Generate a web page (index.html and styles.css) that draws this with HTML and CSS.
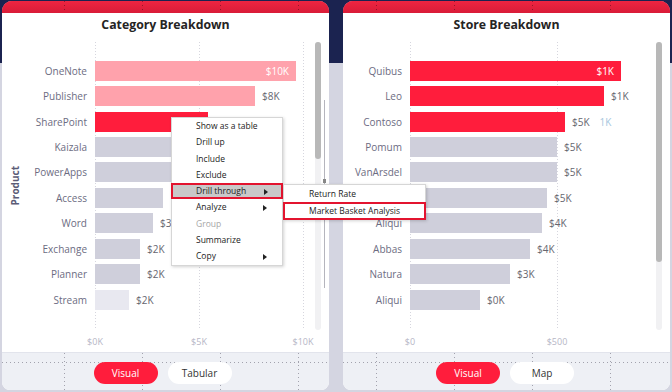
FILE: index.html
```html
<!DOCTYPE html>
<html>
<head>
<meta charset="utf-8">
<title>Breakdown</title>
<link rel="stylesheet" href="styles.css">
</head>
<body>
<div class="canvas">
  <section class="panel">
    <div class="strip strip-cat"></div>
    <h2 class="title">Category Breakdown</h2>
    <div class="chart">
      <div class="ytitle"><span>Product</span></div>
      <div class="main main-cat">
        <div class="rows rows-cat">
          <div class="row"><span class="label">OneNote</span><div class="cell"><div class="bar pink" style="width:201px"><span class="in">$10K</span></div></div></div>
          <div class="row"><span class="label">Publisher</span><div class="cell"><div class="bar pink" style="width:160px"></div><span class="val">$8K</span></div></div>
          <div class="row"><span class="label">SharePoint</span><div class="cell"><div class="bar red" style="width:113px"></div></div></div>
          <div class="row"><span class="label">Kaizala</span><div class="cell"><div class="bar gray" style="width:130px"></div></div></div>
          <div class="row"><span class="label">PowerApps</span><div class="cell"><div class="bar gray" style="width:120px"></div></div></div>
          <div class="row"><span class="label">Access</span><div class="cell"><div class="bar gray" style="width:68px"></div></div></div>
          <div class="row"><span class="label">Word</span><div class="cell"><div class="bar gray" style="width:58px"></div><span class="val">$3K</span></div></div>
          <div class="row"><span class="label">Exchange</span><div class="cell"><div class="bar gray" style="width:45px"></div><span class="val">$2K</span></div></div>
          <div class="row"><span class="label">Planner</span><div class="cell"><div class="bar gray" style="width:45px"></div><span class="val">$2K</span></div></div>
          <div class="row"><span class="label">Stream</span><div class="cell"><div class="bar light" style="width:34px"></div><span class="val">$2K</span></div></div>
        </div>
        <div class="axis axis-cat"><span class="tick"><span>$0K</span></span><span class="tick"><span>$5K</span></span><span class="tick"><span>$10K</span></span></div>
      </div>
      <div class="scroll"><div class="thumb thumb-cat"></div></div>
      <div class="edge"></div>
    </div>
    <div class="footer footer-cat">
      <span class="pill on">Visual</span><span class="pill">Tabular</span>
    </div>
  </section>

  <section class="panel">
    <div class="strip strip-store"></div>
    <h2 class="title">Store Breakdown</h2>
    <div class="chart">
      <div class="main main-store">
        <div class="rows rows-store">
          <div class="row"><span class="label">Quibus</span><div class="cell"><div class="bar red" style="width:211px"><span class="in">$1K</span></div></div></div>
          <div class="row"><span class="label">Leo</span><div class="cell"><div class="bar red" style="width:194px"></div><span class="val">$1K</span></div></div>
          <div class="row"><span class="label">Contoso</span><div class="cell"><div class="bar red" style="width:155px"></div><span class="val">$5K</span><span class="ghost">1K</span></div></div>
          <div class="row"><span class="label">Pomum</span><div class="cell"><div class="bar gray" style="width:147px"></div><span class="val">$5K</span></div></div>
          <div class="row"><span class="label">VanArsdel</span><div class="cell"><div class="bar gray" style="width:147px"></div><span class="val">$5K</span></div></div>
          <div class="row"><span class="label"></span><div class="cell"><div class="bar gray" style="width:137px"></div><span class="val">$5K</span></div></div>
          <div class="row"><span class="label">Aliqui</span><div class="cell"><div class="bar gray" style="width:132px"></div><span class="val">$4K</span></div></div>
          <div class="row"><span class="label">Abbas</span><div class="cell"><div class="bar gray" style="width:120px"></div><span class="val">$4K</span></div></div>
          <div class="row"><span class="label">Natura</span><div class="cell"><div class="bar gray" style="width:100px"></div><span class="val">$3K</span></div></div>
          <div class="row"><span class="label">Aliqui</span><div class="cell"><div class="bar gray" style="width:70px"></div><span class="val">$0K</span></div></div>
        </div>
        <div class="axis axis-store"><span class="tick"><span>$0</span></span><span class="tick"><span>$500</span></span></div>
      </div>
      <div class="scroll"><div class="thumb thumb-store"></div></div>
    </div>
    <div class="footer footer-store">
      <span class="pill on">Visual</span><span class="pill">Map</span>
    </div>
  </section>
</div>

<div class="menu">
  <div class="mi">Show as a table</div>
  <div class="mi">Drill up</div>
  <div class="mi">Include</div>
  <div class="mi">Exclude</div>
  <div class="mi hl">Drill through<span class="arr"></span></div>
  <div class="mi">Analyze<span class="arr"></span></div>
  <div class="mi dis">Group</div>
  <div class="mi">Summarize</div>
  <div class="mi">Copy<span class="arr"></span></div>
</div>
<div class="submenu">
  <div class="si">Return Rate</div>
  <div class="si sel">Market Basket Analysis</div>
</div>
</body>
</html>
```

FILE: styles.css
```css
* { box-sizing: border-box; margin: 0; padding: 0; }
html, body { width: 672px; height: 392px; overflow: hidden; }
body {
  position: relative;
  font-family: "Open Sans", "Noto Sans", sans-serif;
  background: linear-gradient(to bottom, #1b2350 0, #1b2350 63px, #d4d5e1 63px);
}
.canvas { display: flex; gap: 14px; padding: 1px 2px 0 2px; }
.panel {
  width: 327px; height: 389px;
  background: #fff;
  border-radius: 10px 10px 8px 8px;
  overflow: hidden;
  display: flex; flex-direction: column;
}
.strip { height: 12px; background-color: #e4203c; }
.strip-cat {
  background-image:
    repeating-linear-gradient(to bottom, rgba(0,0,0,.35) 0 1px, transparent 1px 4px),
    repeating-linear-gradient(to bottom, rgba(0,0,0,.35) 0 1px, transparent 1px 4px),
    repeating-linear-gradient(to bottom, rgba(0,0,0,.35) 0 1px, transparent 1px 4px),
    repeating-linear-gradient(to bottom, rgba(0,0,0,.35) 0 1px, transparent 1px 4px),
    linear-gradient(#ee2541, #d91c38);
  background-size: 1px 100%, 1px 100%, 1px 100%, 1px 100%, 100% 100%;
  background-position: 62px 0, 140px 0, 218px 0, 296px 0, 0 0;
  background-repeat: no-repeat;
}
.strip-store {
  background-image:
    repeating-linear-gradient(to bottom, rgba(0,0,0,.35) 0 1px, transparent 1px 4px),
    repeating-linear-gradient(to bottom, rgba(0,0,0,.35) 0 1px, transparent 1px 4px),
    repeating-linear-gradient(to bottom, rgba(0,0,0,.35) 0 1px, transparent 1px 4px),
    repeating-linear-gradient(to bottom, rgba(0,0,0,.35) 0 1px, transparent 1px 4px),
    linear-gradient(#ee2541, #d91c38);
  background-size: 1px 100%, 1px 100%, 1px 100%, 1px 100%, 100% 100%;
  background-position: 33px 0, 111px 0, 189px 0, 267px 0, 0 0;
  background-repeat: no-repeat;
}
.title {
  height: 23px; line-height: 23px;
  text-align: center;
  font-size: 12.3px; font-weight: 700;
  color: #252423;
}
.chart { height: 316px; padding-top: 6px; display: flex; align-items: flex-start; }
.ytitle {
  width: 26px; height: 255px; margin-top: 16px;
  display: flex; align-items: center; justify-content: center;
}
.ytitle span {
  writing-mode: vertical-rl; transform: rotate(180deg);
  font-size: 10px; font-weight: 700; color: #5b5b76;
}
.main-cat { width: 276px; }
.main-store { width: 302px; }
.rows { height: 288px; padding-top: 16px; background-repeat: no-repeat; }
.rows-cat {
  background-image:
    repeating-linear-gradient(to bottom, #d6d6de 0 1px, transparent 1px 3px),
    repeating-linear-gradient(to bottom, #d6d6de 0 1px, transparent 1px 3px),
    repeating-linear-gradient(to bottom, #d6d6de 0 1px, transparent 1px 3px);
  background-size: 1px 100%;
  background-position: 67px 0, 171px 0, 275px 0;
}
.rows-store {
  background-image:
    repeating-linear-gradient(to bottom, #d6d6de 0 1px, transparent 1px 3px),
    repeating-linear-gradient(to bottom, #d6d6de 0 1px, transparent 1px 3px);
  background-size: 1px 100%;
  background-position: 67px 0, 214px 0;
}
.row {
  height: 25.44px;
  display: grid; grid-template-columns: 59px 1fr;
  column-gap: 8px; align-items: center;
}
.label { text-align: right; font-size: 10px; color: #6c6c82; white-space: nowrap; }
.cell { display: flex; align-items: center; }
.bar {
  height: 20px; flex: none;
  display: flex; align-items: center; justify-content: flex-end;
  padding-right: 7px;
}
.pink { background: #ffa2ac; }
.red { background: #ff1d3c; }
.gray { background: #cfcfdb; }
.light { background: #e8e8f0; }
.in { color: #fff; font-size: 10px; }
.val { margin-left: 7px; font-size: 10px; color: #666670; white-space: nowrap; }
.ghost { margin-left: 10px; font-size: 10px; color: #a6c6de; }
.axis { display: flex; padding-left: 67px; height: 18px; line-height: 18px; }
.tick { display: block; flex: none; }
.axis-cat .tick { width: 104px; }
.axis-store .tick { width: 147px; }
.tick span { display: inline-block; transform: translateX(-50%); font-size: 9px; color: #b6b6c6; }
.scroll {
  margin-left: 11px; width: 6px; height: 288px;
  background: #f1f1f3; border-radius: 3px;
}
.thumb { width: 6px; background: #b8b8b8; border-radius: 3px; }
.thumb-cat { height: 117px; }
.thumb-store { height: 220px; }
.edge { position: relative; margin-left: 3px; margin-top: 58px; width: 1px; height: 188px; background: #b5b5bd; }
.edge::after { content: ""; position: absolute; left: -1px; top: 79px; width: 3px; height: 4px; background: #888; }
.footer {
  flex: 1;
  display: flex; justify-content: center; gap: 10px;
  padding-top: 9px;
  background-color: #eef0f5;
  border-top: 1px solid #e2e4ec;
  background-repeat: no-repeat;
}
.footer-cat {
  padding-right: 6px;
  background-image:
    repeating-linear-gradient(to bottom, #a2a2ad 0 1px, transparent 1px 4px),
    repeating-linear-gradient(to bottom, #a2a2ad 0 1px, transparent 1px 4px),
    repeating-linear-gradient(to bottom, #a2a2ad 0 1px, transparent 1px 4px),
    repeating-linear-gradient(to bottom, #a2a2ad 0 1px, transparent 1px 4px),
    repeating-linear-gradient(to right, #a2a2ad 0 1px, transparent 1px 4px);
  background-size: 1px 100%, 1px 100%, 1px 100%, 1px 100%, 100% 1px;
  background-position: 62px 0, 140px 0, 218px 0, 296px 0, 0 9px;
}
.footer-store {
  padding-right: 3px;
  background-image:
    repeating-linear-gradient(to bottom, #a2a2ad 0 1px, transparent 1px 4px),
    repeating-linear-gradient(to bottom, #a2a2ad 0 1px, transparent 1px 4px),
    repeating-linear-gradient(to bottom, #a2a2ad 0 1px, transparent 1px 4px),
    repeating-linear-gradient(to bottom, #a2a2ad 0 1px, transparent 1px 4px),
    repeating-linear-gradient(to right, #a2a2ad 0 1px, transparent 1px 4px);
  background-size: 1px 100%, 1px 100%, 1px 100%, 1px 100%, 100% 1px;
  background-position: 33px 0, 111px 0, 189px 0, 267px 0, 0 9px;
}
.pill {
  width: 64px; height: 22px; line-height: 22px;
  border-radius: 11px;
  text-align: center;
  font-size: 10px; color: #333;
  background: #fff;
}
.pill.on { background: #ff1d3c; color: #fff; }

.menu {
  position: absolute; left: 171px; top: 117px;
  width: 112px; height: 149px;
  background: #fff;
  border: 1px solid #d6d6d6;
  box-shadow: 1px 1px 3px rgba(0,0,0,.18);
}
.mi {
  position: relative;
  height: 16.3px; line-height: 16.3px;
  padding-left: 24px;
  font-size: 8.5px; color: #222;
  white-space: nowrap;
}
.mi.hl { background: #c9c9c9; outline: 2px solid #e3142f; outline-offset: -2px; margin: 0 -1px; padding-left: 25px; }
.mi.dis { color: #a6a6a6; }
.arr {
  position: absolute; right: 15px; top: 5.5px;
  width: 0; height: 0;
  border-top: 3px solid transparent; border-bottom: 3px solid transparent;
  border-left: 4px solid #222;
}
.submenu {
  position: absolute; left: 283px; top: 184px;
  width: 143px; height: 36px;
  background: #fff;
  border: 1px solid #d6d6d6;
  box-shadow: 1px 1px 3px rgba(0,0,0,.18);
}
.si {
  height: 17px; line-height: 17px;
  padding-left: 25px;
  font-size: 8.5px; color: #222; white-space: nowrap;
}
.si.sel { outline: 2px solid #e3142f; outline-offset: -2px; height: 18px; line-height: 17px; margin: 0 -1px; padding-left: 26px; }
```
